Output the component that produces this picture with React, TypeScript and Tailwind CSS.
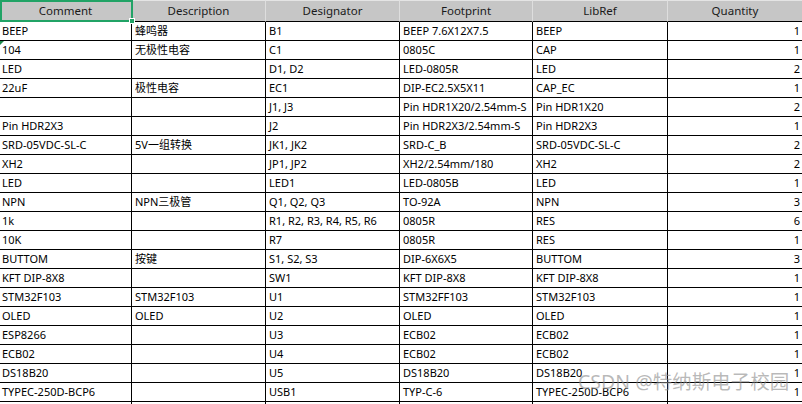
import React from "react";

const cols = [132, 134, 134, 133, 135, 134];
const headers = ["Comment", "Description", "Designator", "Footprint", "LibRef", "Quantity"];
const rows: string[][] = [
  ["BEEP", "蜂鸣器", "B1", "BEEP 7.6X12X7.5", "BEEP", "1"],
  ["104", "无极性电容", "C1", "0805C", "CAP", "1"],
  ["LED", "", "D1, D2", "LED-0805R", "LED", "2"],
  ["22uF", "极性电容", "EC1", "DIP-EC2.5X5X11", "CAP_EC", "1"],
  ["", "", "J1, J3", "Pin HDR1X20/2.54mm-S", "Pin HDR1X20", "2"],
  ["Pin HDR2X3", "", "J2", "Pin HDR2X3/2.54mm-S", "Pin HDR2X3", "1"],
  ["SRD-05VDC-SL-C", "5V一组转换", "JK1, JK2", "SRD-C_B", "SRD-05VDC-SL-C", "2"],
  ["XH2", "", "JP1, JP2", "XH2/2.54mm/180", "XH2", "2"],
  ["LED", "", "LED1", "LED-0805B", "LED", "1"],
  ["NPN", "NPN三极管", "Q1, Q2, Q3", "TO-92A", "NPN", "3"],
  ["1k", "", "R1, R2, R3, R4, R5, R6", "0805R", "RES", "6"],
  ["10K", "", "R7", "0805R", "RES", "1"],
  ["BUTTOM", "按键", "S1, S2, S3", "DIP-6X6X5", "BUTTOM", "3"],
  ["KFT DIP-8X8", "", "SW1", "KFT DIP-8X8", "KFT DIP-8X8", "1"],
  ["STM32F103", "STM32F103", "U1", "STM32FF103", "STM32F103", "1"],
  ["OLED", "OLED", "U2", "OLED", "OLED", "1"],
  ["ESP8266", "", "U3", "ECB02", "ECB02", "1"],
  ["ECB02", "", "U4", "ECB02", "ECB02", "1"],
  ["DS18B20", "", "U5", "DS18B20", "DS18B20", "1"],
  ["TYPEC-250D-BCP6", "", "USB1", "TYP-C-6", "TYPEC-250D-BCP6", "1"],
];

const font = { fontFamily: '"Noto Sans", "Noto Sans CJK SC", sans-serif' };

export default function App() {
  return (
    <div className="relative w-[802px] h-[404px] overflow-hidden bg-white text-[11px] text-black" style={font}>
      <div className="grid grid-cols-[132px_134px_134px_133px_135px_134px]">
        {headers.map((h, i) => (
          <div
            key={h}
            className={`h-[22px] bg-[#c6c6c6] border-t border-t-[#e4e4e4] border-b border-b-black flex items-center justify-center text-[#1a1a1a] text-[11.5px] ${i < 5 ? "border-r border-r-[#dedede]" : ""}`}
          >
            {h}
          </div>
        ))}
        {rows.map((r, ri) =>
          r.map((c, ci) => (
            <div
              key={`${ri}-${ci}`}
              className={`h-[19px] border-b border-b-black flex items-center overflow-hidden whitespace-nowrap ${ci < 5 ? "border-r border-r-black" : ""} ${ci === 5 ? "justify-end pr-[2px]" : ci === 0 ? "pl-[2px]" : "pl-[3px]"}`}
            >
              {c}
            </div>
          ))
        )}
        {cols.map((_, i) => (
          <div key={`f${i}`} className={`h-[4px] ${i < 5 ? "border-r border-r-black" : ""}`} />
        ))}
      </div>

      {/* selection border on Comment header */}
      <div className="absolute left-0 top-0 w-[133px] h-[22px] border-2 border-[#21a366] pointer-events-none" />
      <div className="absolute left-[129px] top-[18px] w-[6px] h-[6px] bg-[#21a366] border border-white" />

      {/* green error triangle on "104" */}
      <div className="absolute left-0 top-[41px] w-0 h-0 border-t-[4px] border-t-[#1e8a4c] border-r-[4px] border-r-transparent" />

      {/* watermark */}
      <div
        className="absolute left-[578px] top-[372px] text-[19.5px] leading-none text-[#8a8a8a]/60 whitespace-nowrap"
        style={font}
      >
        CSDN @特纳斯电子校园
      </div>
    </div>
  );
}
